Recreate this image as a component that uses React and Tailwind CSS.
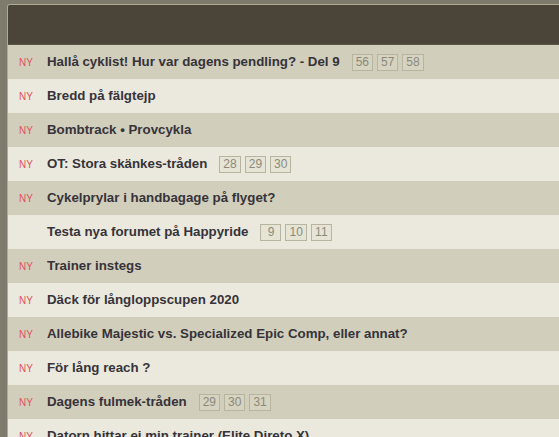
const threads = [
  { title: 'Hallå cyklist! Hur var dagens pendling? - Del 9', pages: ['56', '57', '58'], isNew: true },
  { title: 'Bredd på fälgtejp', isNew: true },
  { title: 'Bombtrack • Provcykla', isNew: true },
  { title: 'OT: Stora skänkes-tråden', pages: ['28', '29', '30'], isNew: true },
  { title: 'Cykelprylar i handbagage på flyget?', isNew: true },
  { title: 'Testa nya forumet på Happyride', pages: ['9', '10', '11'] },
  { title: 'Trainer instegs', isNew: true },
  { title: 'Däck för långloppscupen 2020', isNew: true },
  { title: 'Allebike Majestic vs. Specialized Epic Comp, eller annat?', isNew: true },
  { title: 'För lång reach ?', isNew: true },
  { title: 'Dagens fulmek-tråden', pages: ['29', '30', '31'], isNew: true },
  { title: 'Datorn hittar ei min trainer (Elite Direto X)', isNew: true },
]

function ThreadRow({ thread, odd }) {
  return (
    <div
      className={`h-[34px] flex items-center pl-[11px] ${odd ? 'bg-[#d1cebb]' : 'bg-[#ebe9dd]'}`}
    >
      <span className="w-[28px] shrink-0 text-[10px] text-[#e4505e]">
        {thread.isNew ? 'NY' : ''}
      </span>
      <span className="text-[13.3px] font-bold text-[#36333a] whitespace-nowrap">{thread.title}</span>
      {thread.pages && (
        <div className="flex gap-[4px] ml-[12px]">
          {thread.pages.map((p) => (
            <span
              key={p}
              className="h-[17px] min-w-[21px] px-[3px] flex items-center justify-center border border-[#b7b4a0] bg-[#dedbcb]/40 text-[12px] leading-none text-[#8c897b]"
            >
              {p}
            </span>
          ))}
        </div>
      )}
    </div>
  )
}

export default function App() {
  return (
    <div
      className="w-[559px] h-[437px] overflow-hidden bg-[#7e7a6c] pt-[4px] pl-[7px]"
      style={{ fontFamily: '"Liberation Sans", Arial, sans-serif' }}
    >
      <div className="border-t border-l border-[#aeab95] rounded-tl-[3px] overflow-hidden">
        <div className="h-[39px] bg-[#4a4538]" />
        <div className="border-t border-[#5c5748]">
          {threads.map((t, i) => (
            <ThreadRow key={t.title} thread={t} odd={i % 2 === 0} />
          ))}
        </div>
      </div>
    </div>
  )
}
